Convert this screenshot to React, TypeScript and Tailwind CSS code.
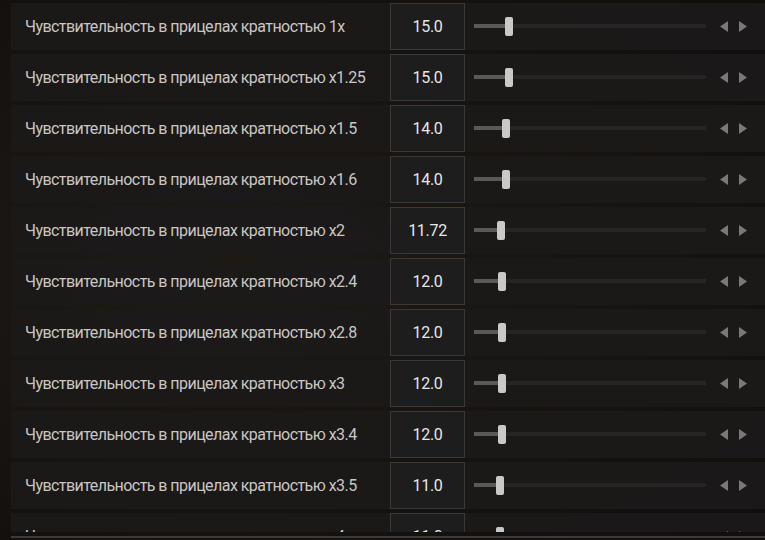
const rows = [
  { label: "Чувствительность в прицелах кратностью 1x", value: "15.0" },
  { label: "Чувствительность в прицелах кратностью x1.25", value: "15.0" },
  { label: "Чувствительность в прицелах кратностью x1.5", value: "14.0" },
  { label: "Чувствительность в прицелах кратностью x1.6", value: "14.0" },
  { label: "Чувствительность в прицелах кратностью x2", value: "11.72" },
  { label: "Чувствительность в прицелах кратностью x2.4", value: "12.0" },
  { label: "Чувствительность в прицелах кратностью x2.8", value: "12.0" },
  { label: "Чувствительность в прицелах кратностью x3", value: "12.0" },
  { label: "Чувствительность в прицелах кратностью x3.4", value: "12.0" },
  { label: "Чувствительность в прицелах кратностью x3.5", value: "11.0" },
  { label: "Чувствительность в прицелах кратностью x4", value: "11.0" },
];

export default function App() {
  return (
    <div
      className="w-[765px] h-[540px] overflow-hidden pl-[11px] bg-[radial-gradient(ellipse_at_30%_50%,#1f1a16_0%,#15110e_70%,#110e0c_100%)]"
      style={{ fontFamily: "Roboto, 'Noto Sans', sans-serif" }}
    >
      <div className="h-[532px] pt-[3px] overflow-hidden flex flex-col gap-[4px]">
        {rows.map((row, i) => (
          <SensitivityRow key={i} label={row.label} value={row.value} />
        ))}
      </div>
      <div className="mt-[4px] h-[2px] bg-[#3e3a37]" />
    </div>
  );
}

function SensitivityRow({ label, value }: RowProps) {
  const v = parseFloat(value);
  const center = (v / 100) * 232;

  return (
    <div className="flex items-center h-[47px] shrink-0 bg-[#1c1a19]/90">
      <p className="w-[379px] pl-[14px] text-[16px] text-[#c9c6c3] tracking-[-0.55px] whitespace-nowrap">
        {label}
      </p>

      <div className="flex items-center justify-center w-[75px] h-full border border-[#3a3938] bg-[#1d1d1e] text-[16px] text-[#e6e6e6] tracking-[-0.3px]">
        {value}
      </div>

      <div className="relative ml-[9px] w-[232px] h-[19px]">
        <div className="absolute left-0 right-0 top-[7px] h-[4px] bg-[#262524]" />
        <div
          className="absolute left-0 top-[7px] h-[4px] bg-[#5a5958]"
          style={{ width: center }}
        />
        <div
          className="absolute top-0 w-[8px] h-[19px] rounded-[2px] bg-[#c9c9c9]"
          style={{ left: center - 4 }}
        />
      </div>

      <div className="flex items-center gap-[11px] ml-[14px]">
        <svg width="8" height="11" viewBox="0 0 8 11">
          <polygon points="8,0 8,11 0,5.5" fill="#7a7978" />
        </svg>
        <svg width="8" height="11" viewBox="0 0 8 11">
          <polygon points="0,0 0,11 8,5.5" fill="#7a7978" />
        </svg>
      </div>
    </div>
  );
}

interface RowProps {
  label: string;
  value: string;
}
